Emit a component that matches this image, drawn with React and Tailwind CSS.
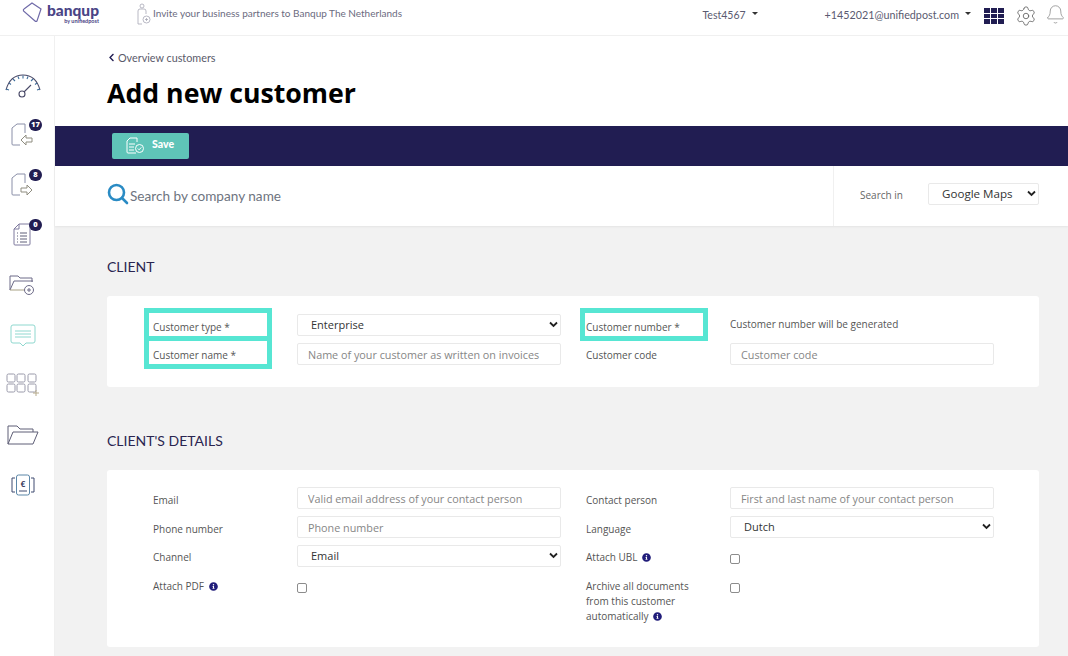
import { Settings, Bell } from 'lucide-react';
import { FaInfoCircle, FaChevronLeft } from 'react-icons/fa';

function Gauge() {
    return (
        <svg width="38" height="26" viewBox="0 0 38 26" fill="none" stroke="#4a4a68" strokeWidth="1.100">
            <path d="M2 18 C5 7 12 3 19 3 C26 3 33 7 36 18" stroke="#4a4a68" />
            <path d="M2 17l3 1M5 11l2 1.500M9 7l2 2M14 4.500l1 2.500M19 3.500v3M24 4.500l-1 2.500M29 7l-2 2M33 11l-2 1.500M36 17l-3 1" stroke="#3f6f9c" />
            <circle cx="18" cy="22" r="3" />
            <path d="M20 20l7-7" />
        </svg>
    );
}

function DocIn() {
    return (
        <svg width="24" height="26" viewBox="0 0 24 26" fill="none" strokeWidth="1">
            <path d="M6 2h8v9M6 2L1 6v16q0 1 1 1h7" stroke="#8a8fa8" />
            <path d="M10 18l5-5v3h6v4h-6v3z" stroke="#8f8d80" />
        </svg>
    );
}

function DocOut() {
    return (
        <svg width="24" height="26" viewBox="0 0 24 26" fill="none" strokeWidth="1">
            <path d="M6 2h8v9M6 2L1 6v16q0 1 1 1h7" stroke="#8a8fa8" />
            <path d="M21 18l-5-5v3h-6v4h6v3z" stroke="#8f8d80" />
        </svg>
    );
}

function DocList() {
    return (
        <svg width="22" height="26" viewBox="0 0 22 26" fill="none" stroke="#7f7a9e" strokeWidth="1">
            <path d="M7 2h10q1 0 1 1v19q0 1-1 1H3q-1 0-1-1V7z" />
            <path d="M7 2v5H2" />
            <path d="M5 11h1M5 14h1M5 17h1M5 20h1M8 11h7M8 14h7M8 17h7M8 20h7" stroke="#5f5f78" />
        </svg>
    );
}

function FolderAdd() {
    return (
        <svg width="28" height="22" viewBox="0 0 28 22" fill="none" stroke="#6d6b88" strokeWidth="1">
            <path d="M1 16V2h8l2 2h12v4" />
            <path d="M1 16L5 7h19" />
            <path d="M1 16h15" stroke="#a8a184" />
            <circle cx="20" cy="16" r="4.500" />
            <path d="M18 16h4M20 14v4" />
        </svg>
    );
}

function Chat() {
    return (
        <svg width="26" height="23" viewBox="0 0 26 23" fill="none" stroke="#8fd8cf" strokeWidth="1">
            <path d="M3 1h20q2 0 2 2v14q0 2-2 2h-7l-3 3-3-3H3q-2 0-2-2V3q0-2 2-2z" />
            <path d="M5 7h16M5 10h16M5 13h16" />
        </svg>
    );
}

function Apps() {
    return (
        <svg width="34" height="24" viewBox="0 0 34 24" fill="none" stroke="#9a9aaa" strokeWidth="1">
            <rect x="1" y="1" width="8" height="8" rx="1.500" />
            <rect x="11" y="1" width="8" height="8" rx="1.500" />
            <rect x="22" y="1" width="8" height="8" rx="1.500" />
            <rect x="1" y="11" width="8" height="8" rx="1.500" />
            <rect x="11" y="11" width="8" height="8" rx="1.500" />
            <rect x="22" y="11" width="8" height="8" rx="1.500" />
            <path d="M30 17v6M27 20h6" stroke="#b5a98a" />
        </svg>
    );
}

function Folder() {
    return (
        <svg width="32" height="22" viewBox="0 0 32 22" fill="none" stroke="#5e5e76" strokeWidth="1">
            <path d="M1 20V2h9l3 3h13v3" />
            <path d="M1 20L6 8h25l-5 12z" />
        </svg>
    );
}

function EuroDocs() {
    return (
        <svg width="26" height="22" viewBox="0 0 26 22" fill="none" stroke="#3f4a70" strokeWidth="1">
            <path d="M5 4H2v14h3M21 4h3v14h-3" />
            <rect x="6.500" y="1" width="13" height="20" rx="2" stroke="#5b86a8" />
            <path d="M9 17h8" />
            <text x="13" y="13" textAnchor="middle" fontSize="8" fontWeight="700" stroke="none" fill="#2b2b50" fontFamily="Lato, sans-serif">€</text>
        </svg>
    );
}

function SideIcon({ badge, children }) {
    return (
        <div className="h-[50px] flex items-center justify-center relative">
            {children}
            {badge !== undefined && (
                <span className="absolute left-[29px] top-[9px] w-[13px] h-[12px] rounded-full bg-[#211d52] text-white text-[7.500px] font-extrabold flex items-center justify-center">
                    {badge}
                </span>
            )}
        </div>
    );
}

function Label({ children, mark, className = '' }) {
    return (
        <div className={`pt-[5px] text-[10px] leading-[15px] text-[#555555] relative ${className}`}>
            {children}
            {mark && <span className={`absolute -top-[7px] border-[5px] border-[#57e6d3] ${mark}`} />}
        </div>
    );
}

function TextInput({ placeholder }) {
    return (
        <input
            placeholder={placeholder}
            className="h-[22px] w-full bg-white border border-[#e9e9e9] rounded-[2px] pl-[10px] text-[10.800px] text-[#444444] placeholder:text-[#868686] outline-none"
        />
    );
}

function Select({ value, className = 'h-[22px] w-full', textClass = 'text-[11px]' }) {
    return (
        <div className={`relative ${className}`}>
            <select defaultValue={value} className={`block appearance-none h-full w-full bg-white border border-[#e9e9e9] rounded-[2px] pl-[13px] text-[#333333] outline-none ${textClass}`}>
                <option>{value}</option>
            </select>
            <svg className="absolute right-[3px] top-[7px] pointer-events-none" width="9" height="7" viewBox="0 0 9 7" fill="none" stroke="#222222" strokeWidth="1.800">
                <path d="M1 1.500l3.500 3.500 3.500-3.500" />
            </svg>
        </div>
    );
}

function Check() {
    return <input type="checkbox" className="appearance-none block w-[10px] h-[10px] mt-[9px] bg-white border border-[#8c8c8c] rounded-[2px]" />;
}

function Info() {
    return <FaInfoCircle className="inline-block ml-[2px] align-[-1px] text-[#211d7a]" size={9} />;
}

export default function App() {
    return (
        <div className="h-[656px] w-[1068px] overflow-hidden bg-white flex flex-col font-['Open_Sans',sans-serif]">
            {/* Top bar */}
            <header className="h-[36px] shrink-0 border-b border-[#f0f0f0] flex items-start font-['Lato',sans-serif]">
                <div className="w-[22px]" />
                <svg className="mt-[1px]" width="20" height="22" viewBox="0 0 20 22" fill="none" stroke="#6f6aa8" strokeWidth="1.200">
                    <path d="M10 2L19 8 15 20Q14 21 13 20L1.500 10Q1 8.500 2 8z" />
                </svg>
                <div className="ml-[5px] w-[52px] flex flex-col items-end">
                    <span className="text-[15.500px] leading-[15px] mt-[3px] font-black text-[#4a4486]">banqup</span>
                    <span className="text-[5.500px] leading-[7px] font-bold text-[#4a4486]">by unifiedpost</span>
                </div>
                <svg className="ml-[38px] mt-[3px]" width="14" height="22" viewBox="0 0 14 22" fill="none" stroke="#a7a7b5" strokeWidth="0.800">
                    <circle cx="5" cy="3" r="2" />
                    <path d="M1 16V8q0-2 2-2h4q2 0 2 2v3M1 16v5h4" />
                    <circle cx="9.500" cy="16.500" r="3.500" />
                    <path d="M8 16.500h3M9.500 15v3" />
                </svg>
                <span className="ml-[2px] mt-[6px] text-[10px] leading-[15px] text-[#6b6b80]">Invite your business partners to Banqup The Netherlands</span>
                <div className="ml-auto flex items-start">
                    <span className="mt-[7px] text-[10.500px] leading-[16px] text-[#5a5a70]">Test4567</span>
                    <span className="mt-[12px] ml-[6px] border-x-[3px] border-t-[3px] border-x-transparent border-t-[#333333]" />
                    <span className="ml-[67px] mt-[7px] text-[10.750px] leading-[16px] text-[#5a5a70]">+1452021@unifiedpost.com</span>
                    <span className="mt-[12px] ml-[6px] border-x-[3px] border-t-[3px] border-x-transparent border-t-[#333333]" />
                    <div className="ml-[13px] mt-[8px] grid grid-cols-3 gap-[1px] w-[20px]">
                        {[0, 1, 2, 3, 4, 5, 6, 7, 8].map((i) => (
                            <span key={i} className="h-[4.500px] bg-[#211d52]" />
                        ))}
                    </div>
                    <Settings className="ml-[11px] mt-[5px] text-[#5e5e5e]" size={22} strokeWidth={0.9} />
                    <Bell className="ml-[8px] mt-[4px] mr-[2px] text-[#8a8a8a]" size={21} strokeWidth={0.9} />
                </div>
            </header>

            <div className="flex-1 flex min-h-0">
                {/* Sidebar */}
                <aside className="w-[55px] shrink-0 border-r border-[#f0f0f0] pt-[24px] pr-[8px]">
                    <SideIcon><Gauge /></SideIcon>
                    <SideIcon badge="17"><DocIn /></SideIcon>
                    <SideIcon badge="8"><DocOut /></SideIcon>
                    <SideIcon badge="0"><DocList /></SideIcon>
                    <SideIcon><FolderAdd /></SideIcon>
                    <SideIcon><Chat /></SideIcon>
                    <SideIcon><Apps /></SideIcon>
                    <SideIcon><Folder /></SideIcon>
                    <SideIcon><EuroDocs /></SideIcon>
                </aside>

                <main className="flex-1 min-w-0 bg-[#f2f2f2]">
                    {/* Page title */}
                    <div className="h-[90px] bg-white pl-[52px] pt-[14px]">
                        <div className="flex items-center text-[10.800px] leading-[15px] text-[#5a5a6a] font-['Lato',sans-serif]">
                            <FaChevronLeft className="text-[#211d52] mr-[2px]" size={9} />
                            Overview customers
                        </div>
                        <h1 className="mt-[10px] text-[26.700px] leading-[36px] font-bold text-black">Add new customer</h1>
                    </div>

                    {/* Action band */}
                    <div className="h-[40px] bg-[#211d52] pl-[57px] pt-[7px]">
                        <button className="w-[77px] h-[26px] rounded-[2px] bg-[#5fc4b8] flex items-center pl-[13px] text-white text-[10.500px] font-black font-['Lato',sans-serif]">
                            <svg width="20" height="18" viewBox="0 0 20 18" fill="none" stroke="#ffffff" strokeWidth="1">
                                <path d="M5 1h7v4M5 1L2 4v11q0 1 1 1h8" />
                                <path d="M4 7h6M4 10h5M4 13h5" />
                                <circle cx="14.500" cy="11.500" r="4" />
                                <path d="M12.800 11.500l1.300 1.300 2.200-2.400" />
                            </svg>
                            <span className="ml-[7px] -mt-[2px]">Save</span>
                        </button>
                    </div>

                    {/* Search */}
                    <div className="h-[60px] bg-white flex shadow-[0_1px_2px_rgba(0,0,0,0.06)]">
                        <div className="flex-1 pl-[52px] pt-[17px] flex items-start">
                            <svg width="22" height="23" viewBox="0 0 22 23" fill="none" stroke="#2a8bc4" strokeWidth="2.600">
                                <circle cx="9.500" cy="9.500" r="7.500" />
                                <path d="M15 15l5 5" strokeLinecap="round" />
                            </svg>
                            <span className="mt-[3px] ml-[1px] text-[13.600px] leading-[20px] text-[#6e7480] font-['Lato',sans-serif]">Search by company name</span>
                        </div>
                        <div className="w-[235px] border-l border-[#f0f0f0] pl-[26px] pr-[29px] flex items-start">
                            <span className="mt-[22px] text-[10px] leading-[15px] text-[#666666]">Search in</span>
                            <Select value="Google Maps" className="h-[22px] w-[111px] ml-auto mt-[17px]" textClass="text-[11.600px]" />
                        </div>
                    </div>

                    {/* Client */}
                    <section className="pl-[52px] pr-[29px]">
                        <h2 className="mt-[32px] text-[14px] leading-[17px] text-[#2a2550] font-['Lato',sans-serif]">CLIENT</h2>
                        <div className="mt-[21px] h-[91px] bg-white rounded-[3px] pl-[46px] pt-[18px]">
                            <div className="grid grid-cols-[144px_264px_169px_264px] gap-y-[7px]">
                                <Label mark="-left-[9px] right-[25px] -bottom-[5px]" className="mt-[1px]">Customer type *</Label>
                                <Select value="Enterprise" />
                                <Label mark="left-[19px] right-[22px] -bottom-[5px]" className="mt-[1px] pl-[25px]">Customer number *</Label>
                                <div className="pt-[3px] text-[10px] leading-[15px] text-[#555555]">Customer number will be generated</div>
                                <Label mark="-left-[9px] right-[25px] -bottom-[4px]">Customer name *</Label>
                                <TextInput placeholder="Name of your customer as written on invoices" />
                                <Label className="pl-[25px]">Customer code</Label>
                                <TextInput placeholder="Customer code" />
                            </div>
                        </div>

                        {/* Client's details */}
                        <h2 className="mt-[45px] text-[14px] leading-[17px] text-[#2a2550] font-['Lato',sans-serif]">CLIENT'S DETAILS</h2>
                        <div className="mt-[21px] h-[177px] bg-white rounded-[3px] pl-[46px] pt-[17px]">
                            <div className="grid grid-cols-[144px_264px_169px_264px] gap-y-[7px]">
                                <Label className="mt-[1px]">Email</Label>
                                <TextInput placeholder="Valid email address of your contact person" />
                                <Label className="mt-[1px] pl-[25px]">Contact person</Label>
                                <TextInput placeholder="First and last name of your contact person" />
                                <Label className="mt-[1px]">Phone number</Label>
                                <TextInput placeholder="Phone number" />
                                <Label className="mt-[1px] pl-[25px]">Language</Label>
                                <Select value="Dutch" />
                                <Label>Channel</Label>
                                <Select value="Email" />
                                <Label className="pl-[25px]">Attach UBL <Info /></Label>
                                <Check />
                                <Label>Attach PDF <Info /></Label>
                                <Check />
                                <Label className="pl-[25px] pr-[30px]">Archive all documents from this customer automatically <Info /></Label>
                                <Check />
                            </div>
                        </div>
                    </section>
                </main>
            </div>
        </div>
    );
}
